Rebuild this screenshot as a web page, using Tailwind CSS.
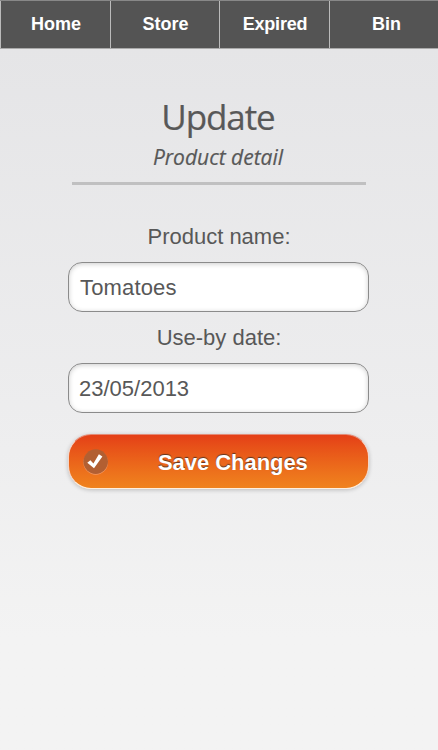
<!DOCTYPE html>
<html lang="en">
<head>
<meta charset="utf-8">
<title>Update product</title>
<script src="https://cdn.jsdelivr.net/npm/@tailwindcss/browser@4"></script>
</head>
<body class="h-[750px] w-[438px] overflow-hidden bg-linear-to-b from-[#e4e4e6] via-[#eeeeef] via-60% to-[#f3f3f3] to-85% font-['Liberation_Sans',Arial,sans-serif] text-[#585858]">
<nav class="flex h-[49px] border-t border-b border-t-[#888] border-b-[#aaa] bg-[#545454] text-[18px] font-bold text-white">
<a class="flex w-[110px] items-center justify-center border-l border-[#bbb] pb-px pl-px"><span>Home</span></a>
<a class="flex w-[109px] items-center justify-center border-l border-[#bbb] pb-px pl-px"><span>Store</span></a>
<a class="flex w-[110px] items-center justify-center border-l border-[#bbb] pb-px pl-px"><span class="tracking-[-0.2px]">Expired</span></a>
<a class="flex w-[109px] items-center justify-center border-l border-[#bbb] pb-px pl-[5px]"><span>Bin</span></a>
</nav>
<main class="flex flex-col items-center">
<header class="mt-[44px] flex h-[92px] w-[294px] flex-col items-center border-b-[3px] border-[#c0c0c1] font-['Open_Sans','Noto_Sans',sans-serif]">
<h1 class="h-[48px] pr-[2px] text-[35px] leading-[48px] tracking-[-1.1px] [-webkit-text-stroke:0.2px_#585858]">Update</h1>
<h2 class="h-[28px] pr-[2px] text-[21px] leading-[32px] italic [-webkit-text-stroke:0.2px_#585858]">Product detail</h2>
</header>
<form class="flex w-[302px] flex-col items-center pr-px text-[22px]">
<label class="mt-[37px] h-[30px] pl-px leading-[30px]">Product name:</label>
<div class="mt-[10px] flex h-[50px] w-full items-center rounded-[14px] border-[1.5px] border-[#8b8b8b] bg-white pl-[11px] tracking-[0.15px] shadow-[inset_0_1px_5px_rgba(0,0,0,0.2)]">Tomatoes</div>
<label class="mt-[11px] h-[30px] pl-px leading-[30px]">Use-by date:</label>
<div class="mt-[10px] flex h-[50px] w-full items-center rounded-[14px] border-[1.5px] border-[#8b8b8b] bg-white pl-[10px] shadow-[inset_0_1px_5px_rgba(0,0,0,0.2)]">23/05/2013</div>
<button type="button" class="mt-[21px] flex h-[55px] w-[301px] items-center rounded-[23px] border border-t-[#e48b76] border-r-[#f3d5c8] border-b-[#fff0df] border-l-[#f3d5c8] bg-linear-to-b from-[#e43f17] to-[#f0831e] pl-[14px] font-bold text-white shadow-[0_1px_4px_rgba(0,0,0,0.22)]">
<svg class="h-[26px] w-[26px]" viewBox="0 0 26 26"><circle cx="12.7" cy="13.4" r="12.3" fill="#f39a65"/><circle cx="12.7" cy="12.6" r="12.3" fill="#b25f32"/><path d="M4.3 13.7 7.4 11.2 10.4 14.4 15.9 5.3 19.4 7.5 11 19.3Z" fill="#fff"/></svg>
<span class="mt-[2px] ml-[49px] tracking-[-0.05px] [text-shadow:0_-1px_1px_#5c3522]">Save Changes</span>
</button>
</form>
</main>
</body>
</html>
